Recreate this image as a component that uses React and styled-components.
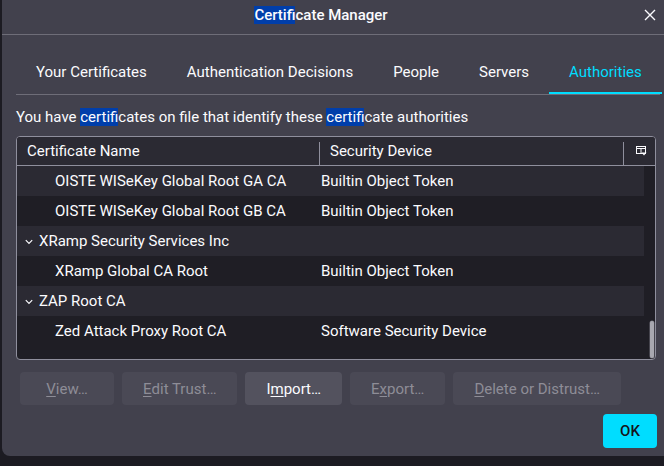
import React from "react";
import styled, { createGlobalStyle } from "styled-components";

const GlobalStyle = createGlobalStyle`
  html, body { margin: 0; padding: 0; background: #1c1b22; }
  body { font-family: Roboto, "Noto Sans", "Liberation Sans", sans-serif; color: #fbfbfe; }
  * { box-sizing: border-box; }
`;

const Window = styled.div`
  margin-left: 2px;
  width: 662px;
  height: 456px;
  background: #42414d;
  border-bottom-left-radius: 8px;
  display: flex;
  flex-direction: column;
  overflow: hidden;
`;

const TitleBar = styled.div`
  height: 35px;
  border-bottom: 1px solid #6e6d78;
  display: flex;
  align-items: center;
`;

const Title = styled.div`
  flex: 1;
  text-align: center;
  font-size: 15px;
  font-weight: 500;
  line-height: 18px;
  padding-bottom: 4px;
`;

const Mark = styled.span`
  background: #003eaa;
  color: #fbfbfe;
`;

const CloseBox = styled.div`
  width: 24px;
  padding-left: 4px;
  padding-bottom: 4px;
  display: flex;
  align-items: center;
`;

const Content = styled.div`
  flex: 1;
  padding: 0 4px 0 14px;
  display: flex;
  flex-direction: column;
`;

const TabStrip = styled.div`
  margin-top: 15px;
  display: flex;
  border-bottom: 1px solid #6e6d78;
`;

const Tab = styled.div`
  height: 44px;
  padding: 0 20px;
  display: flex;
  align-items: center;
  font-size: 15px;
  color: ${(p) => (p.$selected ? "#00ddff" : "#fbfbfe")};
  box-shadow: ${(p) => (p.$selected ? "inset 0 -2px 0 #00ddff" : "none")};
  flex: ${(p) => (p.$selected ? 1 : "none")};
`;

const Description = styled.div`
  margin-top: 13px;
  font-size: 15px;
  line-height: 18px;
`;

const Tree = styled.div`
  margin-top: 10px;
  width: 640px;
  height: 224px;
  border: 1px solid #8f8f9d;
  border-radius: 4px;
  background: #1f1e25;
  overflow: hidden;
  display: flex;
  flex-direction: column;
`;

const Header = styled.div`
  height: 29px;
  flex: none;
  background: #2b2a33;
  border-bottom: 1px solid #8f8f9d;
  display: flex;
`;

const HeaderCell = styled.div`
  width: ${(p) => p.$w}px;
  flex: none;
  display: flex;
  align-items: center;
  padding-left: ${(p) => p.$pad}px;
  font-size: 15px;
`;

const Divider = styled.div`
  width: 1px;
  height: 23px;
  align-self: flex-end;
  background: #8f8f9d;
  flex: none;
`;

const Picker = styled.div`
  flex: 1;
  display: flex;
  align-items: center;
  padding-left: 12px;
  padding-bottom: 1px;
`;

const Body = styled.div`
  flex: 1;
  display: flex;
`;

const Rows = styled.div`
  flex: 1;
  display: flex;
  flex-direction: column;
`;

const Row = styled.div`
  height: 30px;
  flex: none;
  display: flex;
  align-items: center;
  background: ${(p) => (p.$odd ? "#2b2a33" : "#1f1e25")};
  font-size: 15px;
`;

const NameCell = styled.div`
  width: 302px;
  flex: none;
  display: flex;
  align-items: center;
  padding-left: ${(p) => (p.$group ? 8 : 38)}px;
  gap: 6px;
  white-space: nowrap;
`;

const DeviceCell = styled.div`
  flex: 1;
  padding-left: 2px;
  white-space: nowrap;
`;

const ScrollTrack = styled.div`
  width: 11px;
  flex: none;
  display: flex;
  flex-direction: column;
  justify-content: flex-end;
  align-items: flex-end;
  padding: 0 1px 1px 0;
`;

const Thumb = styled.div`
  width: 4px;
  height: 37px;
  border-radius: 2px;
  background: #a8a8b0;
  box-shadow: 0 0 0 0.5px #6e6d78;
`;

const ButtonRow = styled.div`
  margin-top: 12px;
  display: flex;
`;

const Button = styled.div`
  height: 33px;
  min-width: 94px;
  margin: 0 4px;
  padding: 0 21px;
  border-radius: 4px;
  display: flex;
  align-items: center;
  justify-content: center;
  font-size: 15px;
  white-space: nowrap;
  background: ${(p) => (p.$disabled ? "#4a4955" : "#53525e")};
  color: ${(p) => (p.$disabled ? "#8e8d97" : "#fbfbfe")};
`;

const Key = styled.span`
  text-decoration: underline;
  text-underline-offset: 2px;
`;

const OkRow = styled.div`
  margin-top: 9px;
  display: flex;
  justify-content: flex-end;
  padding-right: 3px;
`;

const OkButton = styled.div`
  width: 54px;
  height: 34px;
  border-radius: 4px;
  background: #00ddff;
  color: #15141a;
  font-size: 15px;
  font-weight: 500;
  display: flex;
  align-items: center;
  justify-content: center;
`;

const CloseIcon = () => (
  <svg width="12" height="12" viewBox="0 0 12 12">
    <path d="M1 1 L11 11 M11 1 L1 11" stroke="#fbfbfe" strokeWidth="1.4" fill="none" />
  </svg>
);

const Chevron = () => (
  <svg width="8" height="6" viewBox="0 0 8 6" style={{ marginTop: 2 }}>
    <path d="M0.8 1.2 L4 4.4 L7.2 1.2" stroke="#fbfbfe" strokeWidth="1.2" fill="none" />
  </svg>
);

const ColumnPickerIcon = () => (
  <svg width="11" height="10" viewBox="0 0 11 10">
    <rect x="0.5" y="0.5" width="9" height="7" fill="none" stroke="#fbfbfe" strokeWidth="1" />
    <path d="M0.5 2.5 H9.5 M5 2.5 V7.5" stroke="#fbfbfe" strokeWidth="1" fill="none" />
    <path d="M5.5 6.5 H10.5 L8 9.5 Z" fill="#fbfbfe" />
  </svg>
);

const rows = [
  { name: "OISTE WISeKey Global Root GA CA", device: "Builtin Object Token" },
  { name: "OISTE WISeKey Global Root GB CA", device: "Builtin Object Token" },
  { name: "XRamp Security Services Inc", group: true },
  { name: "XRamp Global CA Root", device: "Builtin Object Token" },
  { name: "ZAP Root CA", group: true },
  { name: "Zed Attack Proxy Root CA", device: "Software Security Device" },
];

const tabs = ["Your Certificates", "Authentication Decisions", "People", "Servers", "Authorities"];

export default function App() {
  return (
    <>
      <GlobalStyle />
      <Window>
        <TitleBar>
          <Title>
            <Mark>Certifi</Mark>cate Manager
          </Title>
          <CloseBox>
            <CloseIcon />
          </CloseBox>
        </TitleBar>
        <Content>
          <TabStrip>
            {tabs.map((t) => (
              <Tab key={t} $selected={t === "Authorities"}>
                {t}
              </Tab>
            ))}
          </TabStrip>
          <Description>
            You have <Mark>certifi</Mark>cates on file that identify these <Mark>certifi</Mark>cate
            authorities
          </Description>
          <Tree>
            <Header>
              <HeaderCell $w={302} $pad={10}>Certificate Name</HeaderCell>
              <Divider />
              <HeaderCell $w={303} $pad={10}>Security Device</HeaderCell>
              <Divider />
              <Picker>
                <ColumnPickerIcon />
              </Picker>
            </Header>
            <Body>
              <Rows>
                {rows.map((r, i) => (
                  <Row key={r.name} $odd={i % 2 === 0}>
                    <NameCell $group={r.group}>
                      {r.group && <Chevron />}
                      {r.name}
                    </NameCell>
                    <DeviceCell>{r.device || ""}</DeviceCell>
                  </Row>
                ))}
              </Rows>
              <ScrollTrack>
                <Thumb />
              </ScrollTrack>
            </Body>
          </Tree>
          <ButtonRow>
            <Button $disabled>
              <Key>V</Key>iew…
            </Button>
            <Button $disabled>
              <Key>E</Key>dit Trust…
            </Button>
            <Button>
              I<Key>m</Key>port…
            </Button>
            <Button $disabled>
              E<Key>x</Key>port…
            </Button>
            <Button $disabled>
              <Key>D</Key>elete or Distrust…
            </Button>
          </ButtonRow>
          <OkRow>
            <OkButton>OK</OkButton>
          </OkRow>
        </Content>
      </Window>
    </>
  );
}
